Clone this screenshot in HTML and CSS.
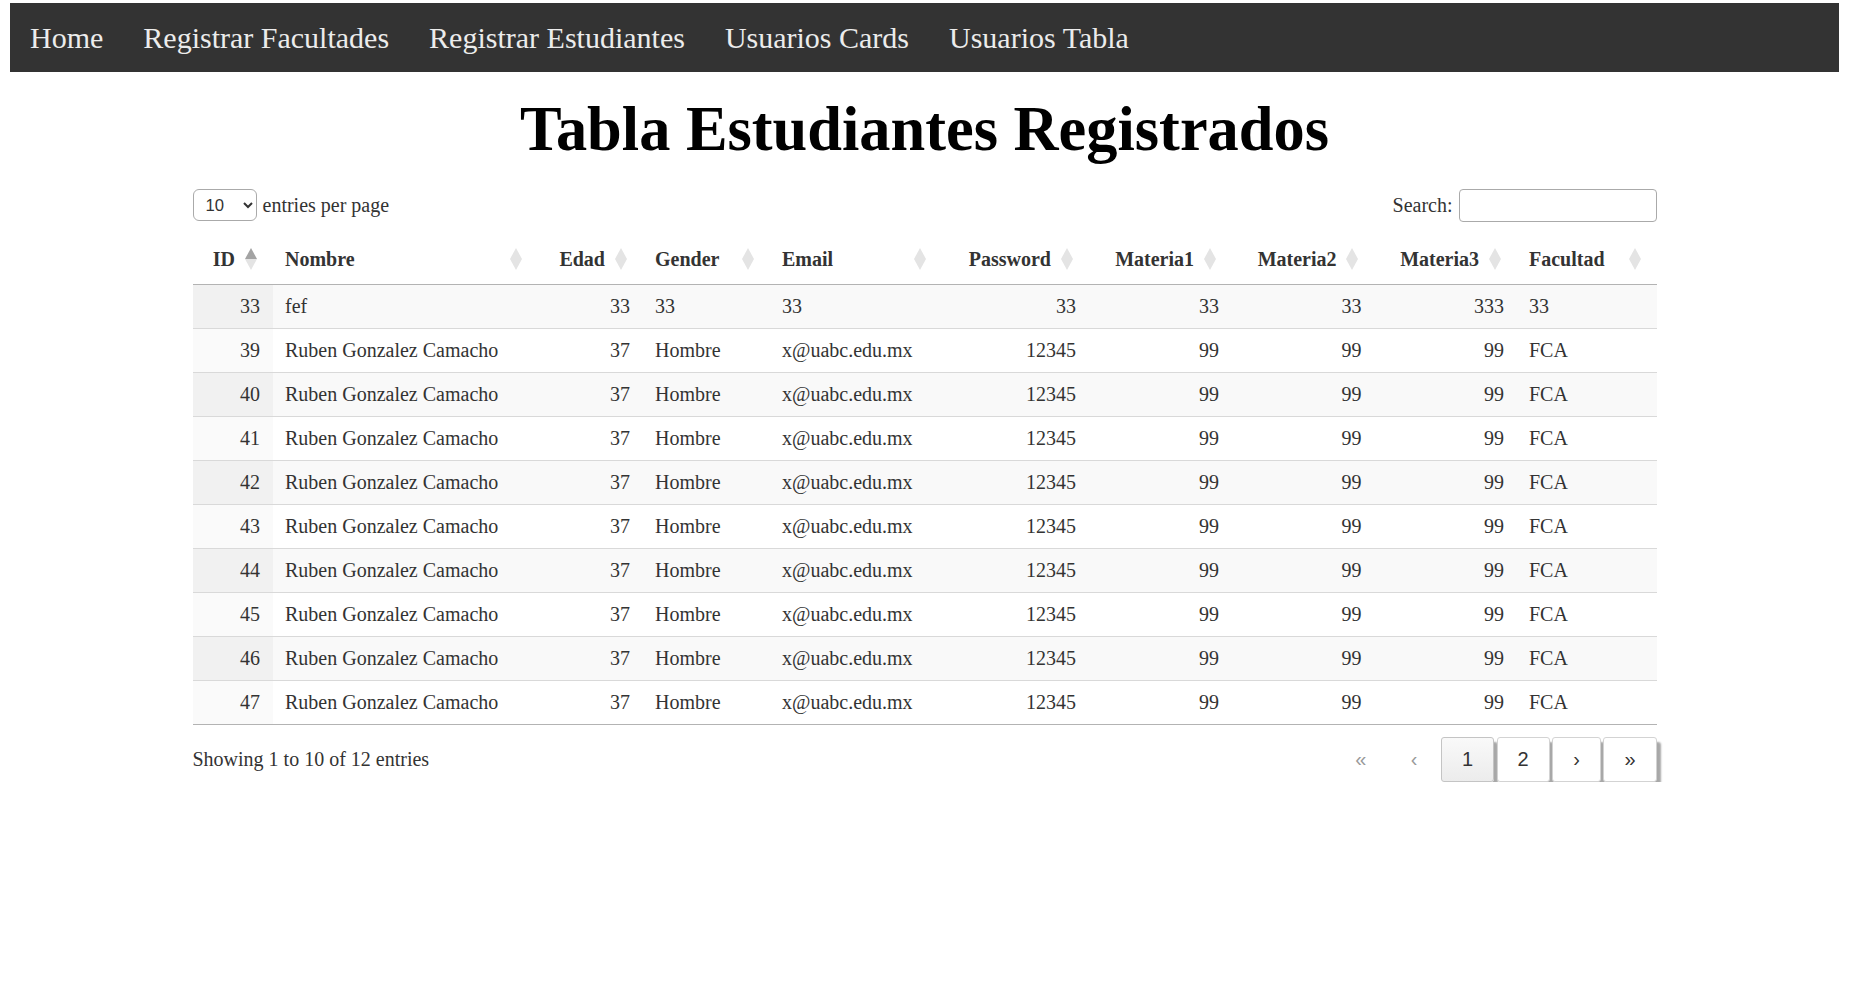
FILE: index.html
```html
<!DOCTYPE html>
<html lang="es">
<head>
<meta charset="utf-8">
<title>Tabla Estudiantes Registrados</title>
<link rel="stylesheet" href="styles.css">
</head>
<body>
<nav class="topnav">
  <a href="#">Home</a>
  <a href="#">Registrar Facultades</a>
  <a href="#">Registrar Estudiantes</a>
  <a href="#">Usuarios Cards</a>
  <a href="#">Usuarios Tabla</a>
</nav>
<h1 class="title">Tabla Estudiantes Registrados</h1>
<div class="dt-container">
  <div class="dt-top">
    <div class="dt-length">
      <select class="dt-select"><option>10</option><option>25</option><option>50</option></select>
      <label>entries per page</label>
    </div>
    <div class="dt-search">
      <label>Search:</label>
      <input type="search" class="dt-input">
    </div>
  </div>
  <table class="dt-table">
    <colgroup>
      <col class="w-id"><col class="w-nombre"><col class="w-edad"><col class="w-gender"><col class="w-email"><col class="w-pass"><col class="w-mat"><col class="w-mat2"><col class="w-mat2"><col class="w-fac">
    </colgroup>
    <thead>
      <tr>
        <th class="num asc">ID<span class="order"></span></th>
        <th>Nombre<span class="order"></span></th>
        <th class="num">Edad<span class="order"></span></th>
        <th>Gender<span class="order"></span></th>
        <th>Email<span class="order"></span></th>
        <th class="num">Password<span class="order"></span></th>
        <th class="num">Materia1<span class="order"></span></th>
        <th class="num">Materia2<span class="order"></span></th>
        <th class="num">Materia3<span class="order"></span></th>
        <th>Facultad<span class="order"></span></th>
      </tr>
    </thead>
    <tbody>
      <tr><td class="num sorted">33</td><td>fef</td><td class="num">33</td><td>33</td><td>33</td><td class="num">33</td><td class="num">33</td><td class="num">33</td><td class="num">333</td><td>33</td></tr>
      <tr><td class="num sorted">39</td><td>Ruben Gonzalez Camacho</td><td class="num">37</td><td>Hombre</td><td>x@uabc.edu.mx</td><td class="num">12345</td><td class="num">99</td><td class="num">99</td><td class="num">99</td><td>FCA</td></tr>
      <tr><td class="num sorted">40</td><td>Ruben Gonzalez Camacho</td><td class="num">37</td><td>Hombre</td><td>x@uabc.edu.mx</td><td class="num">12345</td><td class="num">99</td><td class="num">99</td><td class="num">99</td><td>FCA</td></tr>
      <tr><td class="num sorted">41</td><td>Ruben Gonzalez Camacho</td><td class="num">37</td><td>Hombre</td><td>x@uabc.edu.mx</td><td class="num">12345</td><td class="num">99</td><td class="num">99</td><td class="num">99</td><td>FCA</td></tr>
      <tr><td class="num sorted">42</td><td>Ruben Gonzalez Camacho</td><td class="num">37</td><td>Hombre</td><td>x@uabc.edu.mx</td><td class="num">12345</td><td class="num">99</td><td class="num">99</td><td class="num">99</td><td>FCA</td></tr>
      <tr><td class="num sorted">43</td><td>Ruben Gonzalez Camacho</td><td class="num">37</td><td>Hombre</td><td>x@uabc.edu.mx</td><td class="num">12345</td><td class="num">99</td><td class="num">99</td><td class="num">99</td><td>FCA</td></tr>
      <tr><td class="num sorted">44</td><td>Ruben Gonzalez Camacho</td><td class="num">37</td><td>Hombre</td><td>x@uabc.edu.mx</td><td class="num">12345</td><td class="num">99</td><td class="num">99</td><td class="num">99</td><td>FCA</td></tr>
      <tr><td class="num sorted">45</td><td>Ruben Gonzalez Camacho</td><td class="num">37</td><td>Hombre</td><td>x@uabc.edu.mx</td><td class="num">12345</td><td class="num">99</td><td class="num">99</td><td class="num">99</td><td>FCA</td></tr>
      <tr><td class="num sorted">46</td><td>Ruben Gonzalez Camacho</td><td class="num">37</td><td>Hombre</td><td>x@uabc.edu.mx</td><td class="num">12345</td><td class="num">99</td><td class="num">99</td><td class="num">99</td><td>FCA</td></tr>
      <tr><td class="num sorted">47</td><td>Ruben Gonzalez Camacho</td><td class="num">37</td><td>Hombre</td><td>x@uabc.edu.mx</td><td class="num">12345</td><td class="num">99</td><td class="num">99</td><td class="num">99</td><td>FCA</td></tr>
    </tbody>
  </table>
  <div class="dt-bottom">
    <div class="dt-info">Showing 1 to 10 of 12 entries</div>
    <div class="dt-paging">
      <button class="pg disabled" disabled>«</button>
      <button class="pg disabled" disabled>‹</button>
      <button class="pg current">1</button>
      <button class="pg">2</button>
      <button class="pg">›</button>
      <button class="pg">»</button>
    </div>
  </div>
</div>
</body>
</html>
```
FILE: styles.css
```css
html, body {
  background: #fff;
}
body {
  margin: 3px 10px 10px;
  font-family: "Liberation Serif", "Times New Roman", serif;
  font-size: 20px;
  color: #000;
}
.topnav {
  display: flex;
  background: #333;
}
.topnav a {
  display: block;
  color: #ececec;
  text-decoration: none;
  font-size: 30px;
  padding: 17.5px 20px;
}
.title {
  font-size: 62.4px;
  font-weight: bold;
  text-align: center;
  margin: 21px 0 24px;
  line-height: 71px;
}
.dt-container {
  width: 1464px;
  margin: 0 auto;
  color: #333;
}
.dt-top {
  display: flex;
  justify-content: space-between;
  align-items: center;
  height: 34px;
  margin-bottom: 13px;
}
.dt-length {
  display: flex;
  align-items: center;
  gap: 6px;
}
.dt-select {
  width: 64px;
  height: 32px;
  border: 1px solid #aaa;
  border-radius: 6px;
  padding: 0 4px 0 8px;
  background: transparent;
  font-family: "Liberation Sans", Arial, sans-serif;
  font-size: 16.7px;
  color: #333;
}
.dt-search {
  display: flex;
  align-items: center;
  gap: 6px;
}
.dt-input {
  width: 198px;
  height: 33px;
  box-sizing: border-box;
  border: 1px solid #aaa;
  border-radius: 4px;
  padding: 5px;
  background: transparent;
}
.dt-table {
  width: 1464px;
  table-layout: fixed;
  border-collapse: collapse;
  border-spacing: 0;
  border-bottom: 1px solid #b3b3b3;
}
.w-id { width: 80px; }
.w-nombre { width: 265px; }
.w-edad { width: 105px; }
.w-gender { width: 127px; }
.w-email { width: 172px; }
.w-pass { width: 147px; }
.w-mat { width: 143px; }
.w-mat2 { width: 142.5px; }
.w-fac { width: 140px; }
.dt-table th {
  position: relative;
  font-weight: bold;
  text-align: left;
  padding: 12.5px 37.5px 13.5px 12.5px;
  border-bottom: 1px solid #b3b3b3;
  white-space: nowrap;
}
.dt-table th.num,
.dt-table td.num {
  text-align: right;
}
.order {
  position: absolute;
  top: 0;
  bottom: 0;
  right: 16px;
  width: 12px;
}
.order::before,
.order::after {
  content: "";
  position: absolute;
  left: 0;
  width: 0;
  height: 0;
  border-left: 6px solid transparent;
  border-right: 6px solid transparent;
}
.order::before {
  bottom: calc(50% + 1px);
  border-bottom: 11px solid #e4e4e4;
}
.order::after {
  top: calc(50% - 1px);
  border-top: 11px solid #e4e4e4;
}
th.asc .order::before {
  border-bottom-color: #a3a3a3;
}
.dt-table td {
  padding: 10px 12.5px;
  border-top: 1px solid #d9d9d9;
  white-space: nowrap;
}
.dt-table tbody tr:first-child td {
  border-top: none;
}
.dt-table tbody tr:nth-child(odd) td {
  background: #f9f9f9;
}
.dt-table tbody tr:nth-child(odd) td.sorted {
  background: #f1f1f1;
}
.dt-table tbody tr:nth-child(even) td.sorted {
  background: #fafafa;
}
.dt-bottom {
  display: flex;
  justify-content: space-between;
  align-items: center;
  margin-top: 12px;
}
.dt-paging {
  display: flex;
  gap: 2.5px;
}
.pg {
  font-family: "Liberation Sans", Arial, sans-serif;
  font-size: 20px;
  min-width: 30px;
  padding: 10px 20px;
  border: 1px solid #d3d3d3;
  border-radius: 3px;
  background: #fff;
  color: #333;
  box-shadow: 4px 5px 2px #a8a8a8;
  line-height: 23px;
}
.pg.current {
  background: linear-gradient(#f9f9f9, #ececec);
  border-color: #c4c4c4;
}
.pg.disabled {
  border-color: transparent;
  background: transparent;
  box-shadow: none;
  color: #999;
}
```
